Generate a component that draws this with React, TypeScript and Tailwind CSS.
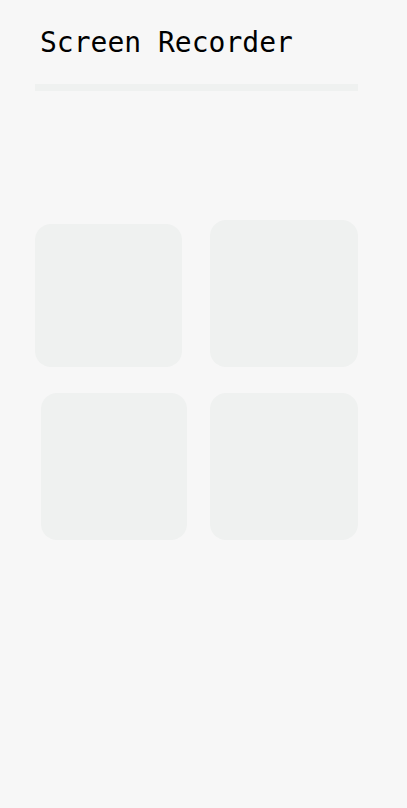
import React from "react";

export default function App() {
  return (
    <div className="min-h-[808px] w-full bg-[#f7f7f7]">
      <div className="pt-[26px]">
        <h1
          className="ml-[40px] text-[28px] leading-[34px] font-normal text-black"
          style={{ fontFamily: '"DejaVu Sans Mono", "Liberation Mono", monospace' }}
        >
          Screen Recorder
        </h1>
        <div className="ml-[35px] mt-[24px] h-[7px] w-[323px] bg-[#eff1f0]" />
        <div className="ml-[35px] mt-[129px] grid w-[323px] grid-cols-[147px_148px] items-end gap-x-[28px] gap-y-[26px]">
          <div className="h-[143px] w-[147px] rounded-2xl bg-[#eff1f0]" />
          <div className="h-[147px] w-[148px] rounded-2xl bg-[#eff1f0]" />
          <div className="ml-[6px] h-[147px] w-[146px] rounded-2xl bg-[#eff1f0]" />
          <div className="h-[147px] w-[148px] rounded-2xl bg-[#eff1f0]" />
        </div>
      </div>
    </div>
  );
}
